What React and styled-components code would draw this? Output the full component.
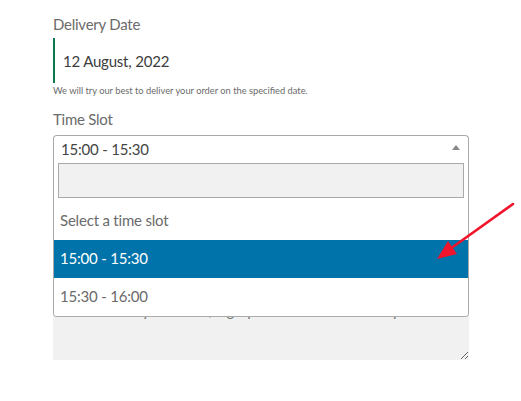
import React from "react";
import styled, { createGlobalStyle } from "styled-components";

const Global = createGlobalStyle`
  html, body { margin: 0; padding: 0; background: #fff; }
  body { font-family: "Lato", "Noto Sans", sans-serif; }
  * { box-sizing: border-box; }
`;

const Page = styled.div`
  position: relative;
  width: 521px;
  height: 401px;
  overflow: hidden;
  padding: 12px 0 0 53px;
`;

const Form = styled.div`
  width: 416px;
  display: flex;
  flex-direction: column;
`;

const Label = styled.div`
  font-size: 15px;
  letter-spacing: -0.25px;
  line-height: 24px;
  color: #6b6b6b;
  margin-top: ${(p) => p.$mt || 0}px;
`;

const DateField = styled.div`
  margin-top: 2px;
  height: 45px;
  border-left: 2px solid #0e7a4c;
  padding-left: 8px;
  display: flex;
  align-items: center;
  font-size: 15px;
  letter-spacing: -0.2px;
  color: #3d3d3d;
`;

const Note = styled.div`
  font-size: 9.3px;
  line-height: 14px;
  color: #6b6b6b;
  margin-top: 1px;
`;

const SelectWrap = styled.div`
  position: relative;
  margin-top: 4px;
`;

const Selection = styled.div`
  height: 28px;
  border: 1px solid #aaa;
  border-bottom: none;
  border-radius: 4px 4px 0 0;
  padding: 0 0 1px 7px;
  display: flex;
  align-items: center;
  justify-content: space-between;
  font-size: 15px;
  letter-spacing: -0.2px;
  color: #444;
`;

const Caret = styled.span`
  width: 0;
  height: 0;
  border-left: 4px solid transparent;
  border-right: 4px solid transparent;
  border-bottom: 5px solid #888;
  margin-right: 8px;
  margin-top: -3px;
`;

const Dropdown = styled.div`
  position: absolute;
  left: 0;
  right: 0;
  top: 28px;
  z-index: 2;
  background: #fff;
  border: 1px solid #aaa;
  border-top: none;
  border-radius: 0 0 4px 4px;
  overflow: hidden;
`;

const SearchWrap = styled.div`
  padding: 0 4px 4px;
`;

const Search = styled.div`
  height: 35px;
  border: 1px solid #aaa;
  background: #f1f1f1;
`;

const Option = styled.div`
  height: 38px;
  padding: 0 0 3px 6px;
  display: flex;
  align-items: center;
  font-size: 15px;
  letter-spacing: -0.2px;
  color: ${(p) => (p.$active ? "#fff" : "#6b6b6b")};
  background: ${(p) => (p.$active ? "#0073aa" : "#fff")};
`;

const NotesArea = styled.textarea`
  display: block;
  margin-top: 127px;
  width: 416px;
  height: 70px;
  border: none;
  background: #f1f1f1;
  padding: 8px 7px;
  font-family: "Lato", "Noto Sans", sans-serif;
  font-size: 15px;
  letter-spacing: -0.2px;
  line-height: 24px;
  color: #444;
  outline: none;
  &::placeholder { color: #777; }
`;

const Arrow = styled.svg`
  position: absolute;
  left: 0;
  top: 0;
  pointer-events: none;
  z-index: 5;
`;

export default function App() {
  return (
    <Page>
      <Global />
      <Form>
        <Label>Delivery Date</Label>
        <DateField>12 August, 2022</DateField>
        <Note>We will try our best to deliver your order on the specified date.</Note>
        <Label $mt={9}>Time Slot</Label>
        <SelectWrap>
          <Selection>
            <span>15:00 - 15:30</span>
            <Caret />
          </Selection>
          <Dropdown>
            <SearchWrap>
              <Search />
            </SearchWrap>
            <Option>Select a time slot</Option>
            <Option $active>15:00 - 15:30</Option>
            <Option>15:30 - 16:00</Option>
          </Dropdown>
        </SelectWrap>
        <NotesArea placeholder="Notes about your order, e.g. special notes for delivery." />
      </Form>
      <Arrow width="521" height="401" viewBox="0 0 521 401">
        <line x1="513" y1="204" x2="450" y2="249" stroke="#f0142d" strokeWidth="2.6" strokeLinecap="round" />
        <polygon points="437,259 448,241 457,254" fill="#f0142d" />
      </Arrow>
    </Page>
  );
}
